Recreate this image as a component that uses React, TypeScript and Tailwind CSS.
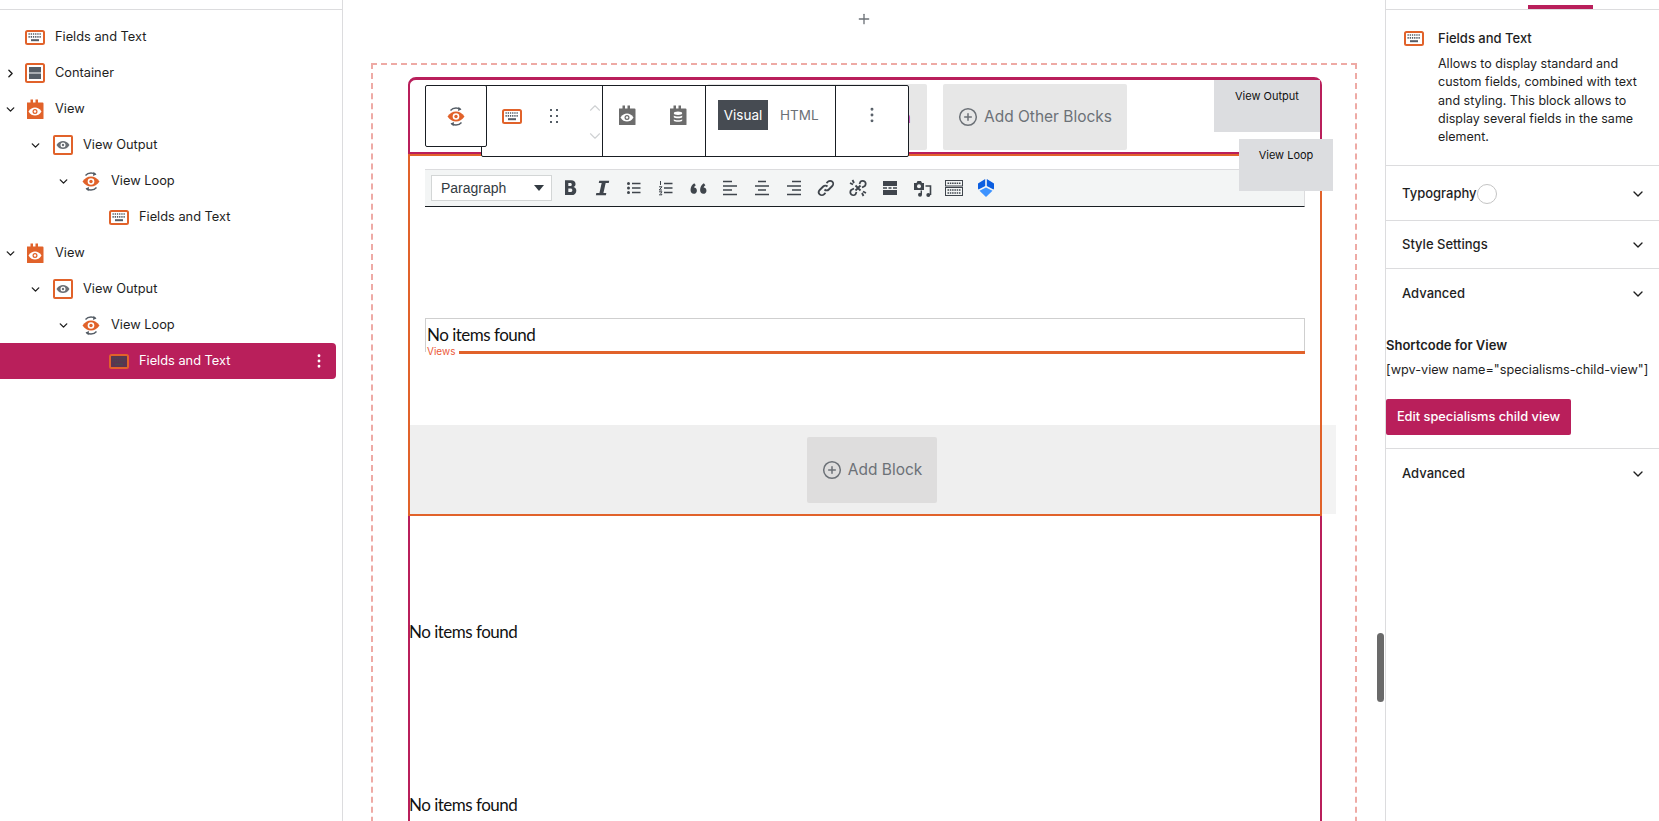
import React from 'react';
import { ChevronDown, ChevronRight, ChevronUp, CirclePlus, EllipsisVertical, Plus } from 'lucide-react';

const ORANGE = '#e1622a';
const GRAY = '#555d66';

function KeyboardIcon({ selected = false }: { selected?: boolean }) {
    const keys = selected ? '#4d4550' : GRAY;
    return (
        <svg width="20" height="15" viewBox="0 0 20 15" className="shrink-0">
            <rect x="1" y="1" width="18" height="13" rx="1.500" fill={selected ? '#5a3550' : '#fff'} stroke={ORANGE} strokeWidth="2" />
            <path d="M3.500 4h13M3.500 6.800h13" stroke={keys} strokeWidth="1.700" strokeDasharray="1.300 .9" />
            <rect x="6" y="9.200" width="8" height="2" fill={keys} />
        </svg>
    );
}

function ContainerIcon() {
    return (
        <svg width="20" height="20" viewBox="0 0 20 20" className="shrink-0">
            <rect x="1" y="1" width="18" height="18" rx="1.500" fill="#fff" stroke={ORANGE} strokeWidth="2" />
            <rect x="4" y="4" width="12" height="5.500" fill={GRAY} />
            <rect x="4" y="10.500" width="12" height="5.500" fill={GRAY} />
        </svg>
    );
}

function Eye({ cx, cy, color, pupil }: { cx: number; cy: number; color: string; pupil: string }) {
    return (
        <g>
            <path d={`M${cx - 6.500} ${cy}c2-3 4-4 6.500-4s4.500 1 6.500 4c-2 3-4 4-6.500 4s-4.500-1-6.500-4z`} fill={color} />
            <circle cx={cx} cy={cy} r="2.500" fill={pupil} />
            <circle cx={cx} cy={cy} r="1.200" fill={color} />
        </g>
    );
}

function BlockShape({ color }: { color: string }) {
    return <path d="M1 3.500h3.500V.5h2.500v3h2.500V.5h2.500v3h4.500a1 1 0 0 1 1 1v15a.6.6 0 0 1-.6.6H1.600a.6.6 0 0 1-.6-.6z" fill={color} />;
}

function ViewIcon() {
    return (
        <svg width="18" height="21" viewBox="0 0 18 21" className="shrink-0">
            <BlockShape color={ORANGE} />
            <Eye cx={9} cy={12.500} color="#fff" pupil={ORANGE} />
        </svg>
    );
}

function OutputIcon() {
    return (
        <svg width="20" height="20" viewBox="0 0 20 20" className="shrink-0">
            <rect x="1" y="1" width="18" height="18" rx="1" fill="#fff" stroke={ORANGE} strokeWidth="2" />
            <Eye cx={10} cy={10} color="#6a6f75" pupil="#fff" />
        </svg>
    );
}

function LoopIcon() {
    return (
        <svg width="18" height="21" viewBox="0 0 18 21" className="shrink-0">
            <path d="M3.500 4.500C5 2.600 7 2 9 2s3 .4 4.500 1.400" fill="none" stroke={GRAY} strokeWidth="1.300" />
            <path d="M11.500 .8l3 2.800-3.500 1.400z" fill={GRAY} />
            <path d="M14.500 16.500C13 18.400 11 19 9 19s-3-.4-4.500-1.400" fill="none" stroke={GRAY} strokeWidth="1.300" />
            <path d="M6.500 20.200l-3-2.800 3.500-1.400z" fill={GRAY} />
            <path d="M.5 10.500c2.500-3.500 5-5 8.500-5s6 1.500 8.500 5c-2.500 3.500-5 5-8.500 5s-6-1.500-8.500-5z" fill={ORANGE} />
            <circle cx="9" cy="10.500" r="3.300" fill="#fff" />
            <circle cx="9" cy="10.500" r="1.700" fill={ORANGE} />
        </svg>
    );
}

function DbBlockIcon() {
    return (
        <svg width="18" height="21" viewBox="0 0 18 21">
            <BlockShape color="#6c6c6c" />
            <ellipse cx="9" cy="8.300" rx="4.200" ry="1.700" fill="#fff" />
            <path d="M4.800 10.600c1.200 1.300 7.200 1.300 8.400 0v1.600c-1.200 1.400-7.200 1.400-8.400 0zM4.800 14.200c1.200 1.300 7.200 1.300 8.400 0v1.600c-1.200 1.400-7.200 1.400-8.400 0z" fill="#fff" />
        </svg>
    );
}

type TreeRow = { depth: number; label: string; icon: React.ReactNode; arrow?: 'open' | 'closed'; selected?: boolean };

const treeRows: TreeRow[] = [
    { depth: 0, label: 'Fields and Text', icon: <KeyboardIcon /> },
    { depth: 0, label: 'Container', icon: <ContainerIcon />, arrow: 'closed' },
    { depth: 0, label: 'View', icon: <ViewIcon />, arrow: 'open' },
    { depth: 1, label: 'View Output', icon: <OutputIcon />, arrow: 'open' },
    { depth: 2, label: 'View Loop', icon: <LoopIcon />, arrow: 'open' },
    { depth: 3, label: 'Fields and Text', icon: <KeyboardIcon /> },
    { depth: 0, label: 'View', icon: <ViewIcon />, arrow: 'open' },
    { depth: 1, label: 'View Output', icon: <OutputIcon />, arrow: 'open' },
    { depth: 2, label: 'View Loop', icon: <LoopIcon />, arrow: 'open' },
    { depth: 3, label: 'Fields and Text', icon: <KeyboardIcon selected />, selected: true },
];

function ListView() {
    return (
        <aside className="w-[343px] shrink-0 h-full border-r border-[#dcdcde]">
            <div className="h-[10px] border-b border-[#dcdcde]" />
            <div className="pt-[9px] pr-[6px]">
                {treeRows.map((row, i) => (
                    <div
                        key={i}
                        className={`flex items-center h-9 rounded-r-sm ${row.selected ? 'bg-[#b91f5b] text-white' : 'text-[#1e1e1e]'}`}
                        style={{ paddingLeft: row.depth * 28 }}
                    >
                        <span className={`w-5 flex justify-center shrink-0 ${row.depth > 0 ? '-translate-x-[3px]' : ''}`}>
                            {row.arrow === 'open' && <ChevronDown size={13} strokeWidth={2.500} />}
                            {row.arrow === 'closed' && <ChevronRight size={13} strokeWidth={2.500} />}
                        </span>
                        <span className="w-5 ml-[5px] flex justify-center shrink-0">{row.icon}</span>
                        <span className="ml-[10px] text-[12.800px]">{row.label}</span>
                        {row.selected && <EllipsisVertical size={18} strokeWidth={1.800} className="ml-auto mr-[8px]" />}
                    </div>
                ))}
            </div>
        </aside>
    );
}

function ToolbarIcon({ children }: { children: React.ReactNode }) {
    return <span className="w-8 h-[26px] flex items-center justify-center shrink-0">{children}</span>;
}

const S = { fill: 'none', stroke: '#3f454c', strokeWidth: 1.800 };

function EditorToolbar() {
    return (
        <div className="h-[38px] flex items-center pl-[6px] bg-[#f3f5f5] border-t border-[#dcdcde] border-r border-r-[#dcdcde] border-b border-b-[#191e23]">
            <div className="w-[121px] h-[26px] mr-[2px] flex items-center justify-between pl-[9px] pr-[7px] bg-white border border-[#d3d6d6] text-[14px] text-[#333b42] font-['Liberation_Sans',sans-serif]">
                Paragraph
                <svg width="10" height="6" viewBox="0 0 10 6"><path d="M0 0h10L5 6z" fill="#333b42" /></svg>
            </div>
            <ToolbarIcon>
                <svg width="20" height="20" viewBox="0 0 18 18"><path d="M4.500 2h5.500c2.500 0 4 1.300 4 3.300 0 1.300-.7 2.300-1.900 2.800 1.600.4 2.600 1.600 2.600 3.300 0 2.500-1.800 4-4.500 4H4.500zm3 2.500v2.700h1.600c1 0 1.500-.5 1.500-1.400 0-.8-.5-1.300-1.500-1.300zm0 5v3.200h1.900c1.100 0 1.700-.6 1.700-1.600s-.6-1.600-1.700-1.600z" fill="#3f454c" fillRule="evenodd" /></svg>
            </ToolbarIcon>
            <ToolbarIcon>
                <svg width="20" height="20" viewBox="0 0 18 18"><path d="M6.500 2.500h9l-.4 2h-2.800l-2 9h2.600l-.4 2h-9l.4-2h2.800l2-9H6.100z" fill="#3f454c" /></svg>
            </ToolbarIcon>
            <ToolbarIcon>
                <svg width="16" height="16" viewBox="0 0 16 16"><path d="M6 3.500h8.500M6 8h8.500M6 12.500h8.500" stroke="#3f454c" strokeWidth="1.300" /><circle cx="2.500" cy="3.500" r="1.500" fill="#3f454c" /><circle cx="2.500" cy="8" r="1.500" fill="#3f454c" /><circle cx="2.500" cy="12.500" r="1.500" fill="#3f454c" /></svg>
            </ToolbarIcon>
            <ToolbarIcon>
                <svg width="16" height="16" viewBox="0 0 16 16"><path d="M6 3.500h8.500M6 8h8.500M6 12.500h8.500" stroke="#3f454c" strokeWidth="1.300" /><path d="M2.500 1v4M1 6.800h3L1.200 10H4M1 11.800h3l-1.300 1.400L4 14.800H1" fill="none" stroke="#3f454c" strokeWidth="1" /></svg>
            </ToolbarIcon>
            <ToolbarIcon>
                <svg width="17" height="15" viewBox="0 0 16 14"><path d="M4 2C1.800 3.200.5 5.500.5 8.500c0 2.200 1.300 3.500 3 3.500s3-1.300 3-3-1.300-2.900-2.700-2.900c.2-.9.900-1.700 1.700-2.200zM13 2c-2.200 1.200-3.500 3.500-3.500 6.500 0 2.200 1.300 3.500 3 3.500s3-1.300 3-3-1.300-2.900-2.700-2.900c.2-.9.900-1.700 1.700-2.200z" fill="#3f454c" /></svg>
            </ToolbarIcon>
            {['M1 2.500h9M1 7h14M1 11h9M1 15.500h14', 'M4 2.500h8M1 7h14M4 11h8M1 15.500h14', 'M6 2.500h9M1 7h14M6 11h9M1 15.500h14'].map(d => (
                <ToolbarIcon key={d}>
                    <svg width="16" height="18" viewBox="0 0 16 18"><path d={d} {...S} strokeWidth={1.700} /></svg>
                </ToolbarIcon>
            ))}
            <ToolbarIcon>
                <svg width="18" height="18" viewBox="0 0 18 18"><path d="M7.500 10.500a3 3 0 0 0 4.300 0l3.500-3.500a3 3 0 0 0-4.300-4.300L9.500 4.200M10.500 7.500a3 3 0 0 0-4.300 0L2.700 11A3 3 0 0 0 7 15.300l1.500-1.500" {...S} /></svg>
            </ToolbarIcon>
            <ToolbarIcon>
                <svg width="18" height="18" viewBox="0 0 18 18"><path d="M10.500 5l1-2.300a3 3 0 0 1 4.300 4.300L13 8.500M7.500 13l-1 2.300A3 3 0 0 1 2.200 11L5 9.500M5 4L3.500 1M4 5.500L1 4M13 14l1.500 3M14 12.500l3 1.500M6.500 6.500l5 5M11.500 6.500l-5 5" {...S} strokeWidth={1.800} /></svg>
            </ToolbarIcon>
            <ToolbarIcon>
                <svg width="16" height="16" viewBox="0 0 16 16"><path d="M1 1h14v5H1zM1 10h14v5H1z" fill="#3f454c" /><path d="M1 8h4M6.500 8h3M11 8h4" stroke="#3f454c" strokeWidth="1.300" /></svg>
            </ToolbarIcon>
            <ToolbarIcon>
                <svg width="19" height="19" viewBox="0 0 19 19"><path d="M1 4h2.500l1-2h3.500l1 2H11v7H1z" fill="#3f454c" /><circle cx="6" cy="7.300" r="2" fill="#f3f5f5" /><path d="M12.500 7h5v9" fill="none" stroke="#3f454c" strokeWidth="1.600" /><circle cx="15.300" cy="16" r="2" fill="#3f454c" /><circle cx="7" cy="15.800" r="2" fill="#3f454c" /><path d="M8.300 15.800V11.500" stroke="#3f454c" strokeWidth="1.400" /></svg>
            </ToolbarIcon>
            <ToolbarIcon>
                <svg width="18" height="16" viewBox="0 0 18 16"><rect x=".5" y=".5" width="17" height="5.500" fill="none" stroke="#3f454c" /><rect x=".5" y="7.500" width="17" height="8" fill="none" stroke="#3f454c" /><path d="M2.500 3.200h13M2.500 10h13M2.500 13h13" stroke="#3f454c" strokeWidth="1.400" strokeDasharray="1.500 .8" /></svg>
            </ToolbarIcon>
            <ToolbarIcon>
                <svg width="18" height="20" viewBox="0 0 18 20"><path d="M8.200 1v7L1.500 11.500C1 11 1 10.500 1 9.500V5.500z" fill="#0b5ee0" /><path d="M9.800 1v7l6.700 3.500c.5-.5.500-1 .5-2V5.500z" fill="#0b5ee0" /><path d="M9 9.500l6.500 3.300L9 19l-6.500-6.200z" fill="#3d93ff" /></svg>
            </ToolbarIcon>
        </div>
    );
}

function BlockToolbar() {
    return (
        <>
            <div className="absolute left-[71px] top-[5px] h-[72px] w-[428px] flex bg-white border border-[#191e23] rounded-[2px]">
                <div className="w-[120px] shrink-0 h-[60px] flex items-center relative">
                    <span className="ml-[20px]"><KeyboardIcon /></span>
                    <svg width="10" height="16" viewBox="0 0 10 16" className="ml-[27px] fill-[#555d66]">
                        <rect x="1" y="1" width="2" height="2" />
                        <rect x="7" y="1" width="2" height="2" />
                        <rect x="1" y="7" width="2" height="2" />
                        <rect x="7" y="7" width="2" height="2" />
                        <rect x="1" y="13" width="2" height="2" />
                        <rect x="7" y="13" width="2" height="2" />
                    </svg>
                    <span className="absolute right-[-2px] top-[13px] flex flex-col gap-[10px] text-[#cfd1d3]">
                        <ChevronUp size={18} strokeWidth={1.500} />
                        <ChevronDown size={18} strokeWidth={1.500} />
                    </span>
                </div>
                <div className="w-[103px] shrink-0 border-l border-[#191e23] h-full flex items-start pt-[19px] pl-[15px] gap-[33px]">
                    <svg width="18" height="21" viewBox="0 0 18 21">
                        <BlockShape color="#6c6c6c" />
                        <Eye cx={9} cy={12.500} color="#fff" pupil="#6c6c6c" />
                    </svg>
                    <DbBlockIcon />
                </div>
                <div className="w-[130px] shrink-0 border-l border-[#191e23] h-full flex items-start pt-[14px] pl-[12px] text-[13.500px]">
                    <span className="w-[50px] h-[30px] flex items-center justify-center bg-[#464b52] text-white">Visual</span>
                    <span className="ml-[12px] h-[30px] flex items-center text-[#6c7177]">HTML</span>
                </div>
                <div className="flex-1 border-l border-[#191e23] flex justify-center pt-[19px] text-[#555d66]">
                    <EllipsisVertical size={20} strokeWidth={1.500} />
                </div>
            </div>
            <div className="absolute left-[15px] top-[5px] w-[62px] h-[62px] flex items-center justify-center bg-white border border-[#191e23] rounded-[2px]">
                <LoopIcon />
            </div>
        </>
    );
}

function AddButton({ label, className }: { label: string; className: string }) {
    return (
        <div className={`h-[66px] shrink-0 flex items-center justify-center gap-[6px] rounded-[2px] text-[15.500px] text-[#6c7177] ${className}`}>
            <CirclePlus size={20} strokeWidth={1.800} />
            {label}
        </div>
    );
}

const noItems = "text-[17px] tracking-[-0.5px] text-[#111] font-['Lato',sans-serif]";

function Canvas() {
    return (
        <main className="flex-1 min-w-0 h-full relative overflow-hidden">
            <div className="h-[38px] flex items-center justify-center text-[#6c7177]">
                <Plus size={16} />
            </div>
            <div className="ml-[28px] mt-[25px] w-[986px] h-[800px] border-2 border-dashed border-[#eeaaa5] pt-[12px] pl-[35px]">
                <div className="relative w-[914px] h-[800px] border-2 border-t-[3px] border-[#b91f5b] rounded-t-lg">
                    <div className="h-[74px] pt-[4px] pl-[297px] flex gap-4 border-b-2 border-[#b91f5b]">
                        <div className="w-[220px] h-[66px] flex items-center justify-end bg-[#e7e7e7] rounded-[2px] pr-[16px] text-[16px] text-[#c2307f]">n</div>
                        <AddButton label="Add Other Blocks" className="w-[184px] bg-[#e7e7e7]" />
                    </div>
                    <div className="relative -mx-[2px] border-2 border-t-[2px] border-[#e1622a] pt-[13px]">
                        <div className="px-[15px]">
                            <EditorToolbar />
                            <div className={`mt-[111px] h-[34px] border border-b-0 border-[#cfcfcf] pl-[1px] leading-[32px] ${noItems}`}>
                                No items found
                            </div>
                            <div className="h-[12px] -mt-[7px] flex items-center pl-[2px] gap-[4px] text-[10px] text-[#ec5a3a]">
                                <span className="bg-white pr-[4px] -mr-[4px]">Views</span>
                                <span className="flex-1 h-[3px] bg-[#e1622a] mt-[3px]" />
                            </div>
                        </div>
                        <div className="relative mt-[68px] h-[89px] flex justify-center bg-[#efefef] pt-[12px] pl-[14px]">
                            <AddButton label="Add Block" className="w-[130px] bg-[#dedddd]" />
                            <div className="absolute left-full top-0 h-full w-[14px] ml-[2px] bg-[#f3f3f3]" />
                        </div>
                    </div>
                    <p className={`mt-[105px] -ml-px leading-[22px] ${noItems}`}>No items found</p>
                    <p className={`mt-[151px] -ml-px leading-[22px] ${noItems}`}>No items found</p>
                    <BlockToolbar />
                    <div className="absolute right-0 top-0 w-[106px] h-[52px] pt-[8px] text-center bg-[#dcdde0] text-[11px] text-[#111]">View Output</div>
                    <div className="absolute right-[-13px] top-[59px] w-[94px] h-[52px] pt-[8px] text-center bg-[#dcdde0] text-[11px] text-[#111]">View Loop</div>
                </div>
            </div>
            <div className="absolute right-[1px] top-[633px] w-[7px] h-[69px] rounded-full bg-[#6a6a6a]" />
        </main>
    );
}

function PanelRow({ label, className = '', extra }: { label: string; className?: string; extra?: React.ReactNode }) {
    return (
        <div className={`flex items-center pl-4 pr-[13px] text-[13px] font-medium text-[#1e1e1e] ${className}`}>
            {label}
            {extra}
            <ChevronDown size={16} strokeWidth={2} className="ml-auto" />
        </div>
    );
}

function Sidebar() {
    return (
        <aside className="w-[274px] shrink-0 h-full border-l border-[#dcdcde] text-[13px] text-[#1e1e1e]">
            <div className="h-[10px] border-b border-[#dcdcde] flex items-end pl-[142px]">
                <span className="w-[65px] h-1 bg-[#b91f5b]" />
            </div>
            <div className="h-[156px] border-b border-[#dcdcde] pt-[19px] pl-[18px] pr-3 flex gap-[14px]">
                <span className="mt-[2px]"><KeyboardIcon /></span>
                <div>
                    <div className="font-medium leading-[18px]">Fields and Text</div>
                    <p className="mt-[8px] leading-[18.300px] text-[12.500px]">
                        Allows to display standard and custom fields, combined with text and styling. This block allows to display several fields in the same element.
                    </p>
                </div>
            </div>
            <PanelRow
                label="Typography"
                className="h-[55px] pt-[1px] border-b border-[#dcdcde]"
                extra={<span className="w-5 h-5 rounded-full bg-white border border-[#c4c4c4]" />}
            />
            <PanelRow label="Style Settings" className="h-[48px] pt-[1px] border-b border-[#dcdcde]" />
            <PanelRow label="Advanced" className="h-[48px] pt-[1px]" />
            <div className="border-b border-[#dcdcde] h-[132px] pt-[19px]">
                <div className="font-semibold leading-[18px]">Shortcode for View</div>
                <div className="mt-[7px] leading-[18px] whitespace-nowrap text-[12.700px]">[wpv-view name="specialisms-child-view"]</div>
                <div className="mt-[20px] w-[185px] h-9 flex items-center justify-center rounded-[2px] bg-[#b91f5b] text-white text-[12.800px] font-medium">
                    Edit specialisms child view
                </div>
            </div>
            <PanelRow label="Advanced" className="h-[50px]" />
        </aside>
    );
}

export default function App() {
    return (
        <div className="flex w-full h-screen overflow-hidden bg-white font-['Inter',sans-serif]">
            <ListView />
            <Canvas />
            <Sidebar />
        </div>
    );
}
